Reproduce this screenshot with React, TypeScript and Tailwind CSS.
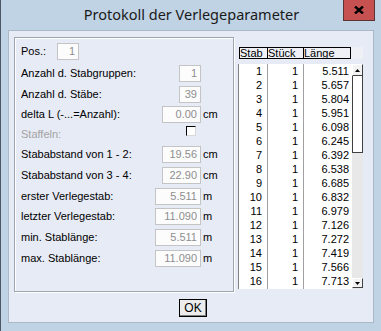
import React from 'react'

const ROWS = [
  { label: 'Anzahl d. Stabgruppen:', value: '1', w: 'w-[22px]', unit: '', h: 'h-[21px]' },
  { label: 'Anzahl d. Stäbe:', value: '39', w: 'w-[22px]', unit: '', h: 'h-[20px]' },
  { label: 'delta L (-...=Anzahl):', value: '0.00', w: 'w-[39px]', unit: 'cm', h: 'h-[20px]' },
]

const ROWS2 = [
  { label: 'Stababstand von 1 - 2:', value: '19.56', w: 'w-[39px]', unit: 'cm', h: 'h-[20px]' },
  { label: 'Stababstand von 3 - 4:', value: '22.90', w: 'w-[39px]', unit: 'cm', h: 'h-[22px]' },
  { label: 'erster Verlegestab:', value: '5.511', w: 'w-[46px]', unit: 'm', h: 'h-[20px]' },
  { label: 'letzter Verlegestab:', value: '11.090', w: 'w-[46px]', unit: 'm', h: 'h-[21px]' },
  { label: 'min. Stablänge:', value: '5.511', w: 'w-[46px]', unit: 'm', h: 'h-[21px]' },
  { label: 'max. Stablänge:', value: '11.090', w: 'w-[46px]', unit: 'm', h: 'h-[20px]' },
]

const LENGTHS = [
  '5.511', '5.657', '5.804', '5.951', '6.098', '6.245', '6.392', '6.538',
  '6.685', '6.832', '6.979', '7.126', '7.272', '7.419', '7.566', '7.713',
]

function Field({ value, w }: { value: string; w: string }) {
  return (
    <div className={`${w} h-[17px] bg-[#fcfcfc] border border-[#c4c4c4] text-right pr-[3px] text-[#8e8e8e] leading-[15px]`}>
      {value}
    </div>
  )
}

function Row({ label, value, w, unit, h }: { label: string; value: string; w: string; unit: string; h: string }) {
  return (
    <div className={`flex items-center ${h}`}>
      <span className="flex-1">{label}</span>
      <Field value={value} w={w} />
      <span className="w-[32px] pl-[2px]">{unit}</span>
    </div>
  )
}

export default function App() {
  return (
    <div className="w-[381px] h-[331px] overflow-hidden bg-[#bfd3e4] border-l border-[#4a5866] font-['Liberation_Sans',Arial,sans-serif] text-[11px] text-black">
      {/* Title bar */}
      <div className="relative h-[30px] flex items-center justify-center">
        <span className="font-['Noto_Sans',sans-serif] text-[14.5px] text-[#1a1a1a] pl-[1px]">Protokoll der Verlegeparameter</span>
        <div className="absolute top-0 right-[6px] w-[32px] h-[21px] bg-[#c75050] border border-[#5b3434] border-t-0 flex items-center justify-center">
          <svg width="10" height="8" viewBox="0 0 10 8">
            <path d="M1 0.5 L9 7.5 M9 0.5 L1 7.5" stroke="#000" strokeWidth="2.4" />
          </svg>
        </div>
      </div>

      {/* Client */}
      <div className="ml-[7px] w-[366px] h-[293px] bg-[#e7ebf5] border border-[#aab8c7]">
        <div className="flex">
          {/* Group box */}
          <div className="mt-[6px] ml-[5px] w-[220px] h-[255px] border border-[#9ea5ae] shadow-[inset_1px_1px_0_#fff,1px_1px_0_#fff] pl-[6px] pt-[2px]">
            <div className="flex items-center h-[23px]">
              <span className="w-[36px]">Pos.:</span>
              <Field value="1" w="w-[22px]" />
            </div>
            {ROWS.map(r => <Row key={r.label} {...r} />)}
            <div className="flex items-center h-[20px]">
              <span className="flex-1 text-[#a3a3a3]">Staffeln:</span>
              <div className="w-[10px] h-[10px] bg-white border-t border-l border-black border-r border-b border-r-[#d8d8d8] border-b-[#d8d8d8] mr-[5px] mt-[-6px]" />
              <span className="w-[32px]" />
            </div>
            {ROWS2.map(r => <Row key={r.label} {...r} />)}
          </div>

          {/* Table */}
          <div className="ml-[4px] mt-[16px]">
            <div className="flex ml-[1px] h-[12px] leading-[10px] bg-[#eef0f6]">
              <div className="w-[29px] border border-black">Stab</div>
              <div className="w-[36px] border border-l-0 border-black">Stück</div>
              <div className="w-[47px] border border-l-0 border-black">Länge</div>
            </div>
            <div className="flex mt-[5px] h-[225px]">
              <div className="border-l border-[#808080] bg-white">
                {LENGTHS.map((l, i) => (
                  <div key={i} className="flex h-[14px] leading-[14px]">
                    <div className="w-[29px] border-r border-[#a0a0a0] text-right pr-[5px]">{i + 1}</div>
                    <div className="w-[36px] border-r border-[#a0a0a0] text-right pr-[5px]">1</div>
                    <div className="w-[48px] text-right pr-[3px]">{l}</div>
                  </div>
                ))}
                <div className="flex h-[1px]">
                  <div className="w-[29px] border-r border-[#a0a0a0]" />
                  <div className="w-[36px] border-r border-[#a0a0a0]" />
                </div>
              </div>
              {/* Scrollbar */}
              <div className="w-[11px] flex flex-col bg-[#e8e8e8]">
                <div className="h-[12px] bg-[#f2f2f2] border-t border-l border-white border-r border-b border-r-[#404040] border-b-[#404040] flex items-center justify-center">
                  <svg width="5" height="3" viewBox="0 0 5 3"><path d="M2.5 0 L5 3 L0 3 Z" fill="#000" /></svg>
                </div>
                <div className="h-[77px] bg-white border-l border-r border-b border-[#404040]" />
                <div className="flex-1" />
                <div className="h-[10px] mb-[1px] bg-[#f2f2f2] border-t border-l border-white border-r border-b border-r-[#404040] border-b-[#404040] flex items-center justify-center">
                  <svg width="5" height="3" viewBox="0 0 5 3"><path d="M0 0 L5 0 L2.5 3 Z" fill="#000" /></svg>
                </div>
              </div>
            </div>
          </div>
        </div>

        {/* OK */}
        <div className="mt-[7px] ml-[170px] w-[28px] h-[18px] border border-black bg-[#ececec] shadow-[inset_-1px_-1px_0_#808080] flex items-center justify-center text-[12px]">
          OK
        </div>
      </div>
    </div>
  )
}
